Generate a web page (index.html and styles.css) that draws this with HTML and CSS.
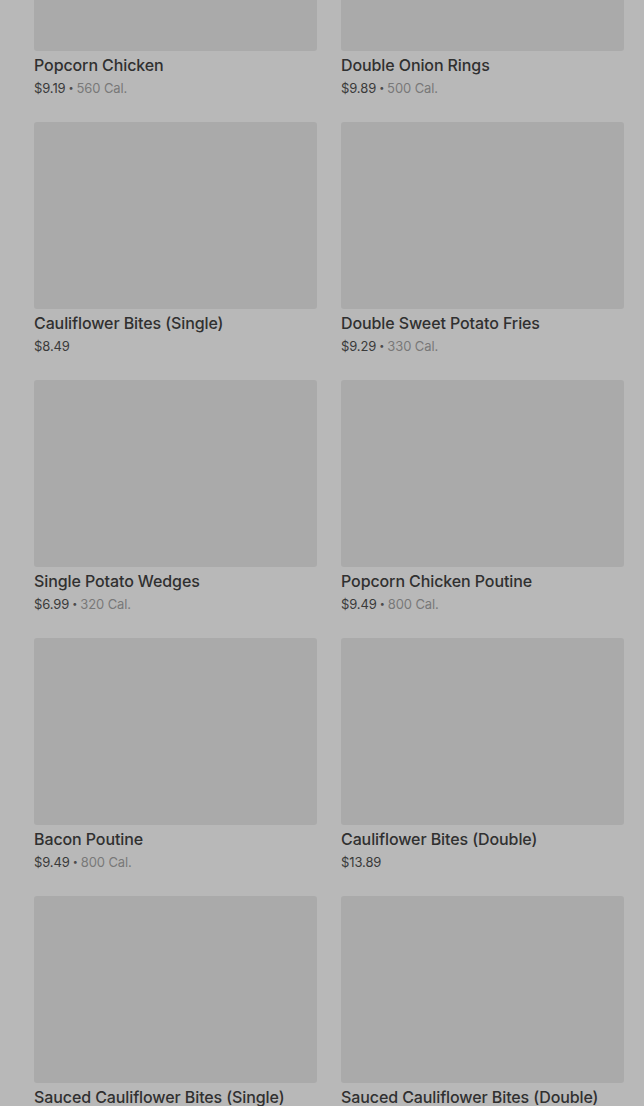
FILE: index.html
```html
<!DOCTYPE html>
<html>
<head>
<meta charset="utf-8">
<link rel="stylesheet" href="styles.css">
</head>
<body>
<main class="menu">
  <div class="grid">
    <article class="item"><div class="thumb"></div><h3 class="name">Popcorn Chicken</h3><p class="meta"><span class="price">$9.19</span><span class="dot">•</span><span class="cal">560 Cal.</span></p></article>
    <article class="item"><div class="thumb"></div><h3 class="name">Double Onion Rings</h3><p class="meta"><span class="price">$9.89</span><span class="dot">•</span><span class="cal">500 Cal.</span></p></article>
    <article class="item"><div class="thumb"></div><h3 class="name">Cauliflower Bites (Single)</h3><p class="meta"><span class="price">$8.49</span></p></article>
    <article class="item"><div class="thumb"></div><h3 class="name">Double Sweet Potato Fries</h3><p class="meta"><span class="price">$9.29</span><span class="dot">•</span><span class="cal">330 Cal.</span></p></article>
    <article class="item"><div class="thumb"></div><h3 class="name">Single Potato Wedges</h3><p class="meta"><span class="price">$6.99</span><span class="dot">•</span><span class="cal">320 Cal.</span></p></article>
    <article class="item"><div class="thumb"></div><h3 class="name">Popcorn Chicken Poutine</h3><p class="meta"><span class="price">$9.49</span><span class="dot">•</span><span class="cal">800 Cal.</span></p></article>
    <article class="item"><div class="thumb"></div><h3 class="name">Bacon Poutine</h3><p class="meta"><span class="price">$9.49</span><span class="dot">•</span><span class="cal">800 Cal.</span></p></article>
    <article class="item"><div class="thumb"></div><h3 class="name">Cauliflower Bites (Double)</h3><p class="meta"><span class="price">$13.89</span></p></article>
    <article class="item"><div class="thumb"></div><h3 class="name">Sauced Cauliflower Bites (Single)</h3><p class="meta"><span class="price">$10.49</span></p></article>
    <article class="item"><div class="thumb"></div><h3 class="name">Sauced Cauliflower Bites (Double)</h3><p class="meta"><span class="price">$16.99</span></p></article>
  </div>
</main>
</body>
</html>
```
FILE: styles.css
```css
html, body {
  margin: 0;
  padding: 0;
  background: #b8b8b8;
  overflow: hidden;
  height: 1106px;
}
body {
  font-family: Inter, "Noto Sans", sans-serif;
  color: #2f2f2f;
}
.menu {
  padding: 0 20px 0 34px;
  margin-top: -136px;
}
.grid {
  display: grid;
  grid-template-columns: 283px 283px;
  column-gap: 24px;
  row-gap: 24px;
}
.item {
  display: flex;
  flex-direction: column;
}
.thumb {
  height: 187px;
  background: #aaaaaa;
  border-radius: 3px;
}
.name {
  margin: 2px 0 0;
  font-size: 16px;
  line-height: 24px;
  font-weight: 500;
  letter-spacing: -0.1px;
  color: #303030;
  white-space: nowrap;
}
.meta {
  margin: 1px 0 0;
  font-size: 13px;
  line-height: 20px;
  letter-spacing: -0.1px;
  display: flex;
  align-items: center;
  gap: 3px;
}
.price {
  color: #3a3a3a;
}
.dot {
  font-size: 9px;
  color: #4a4a4a;
}
.cal {
  color: #787878;
}
```
